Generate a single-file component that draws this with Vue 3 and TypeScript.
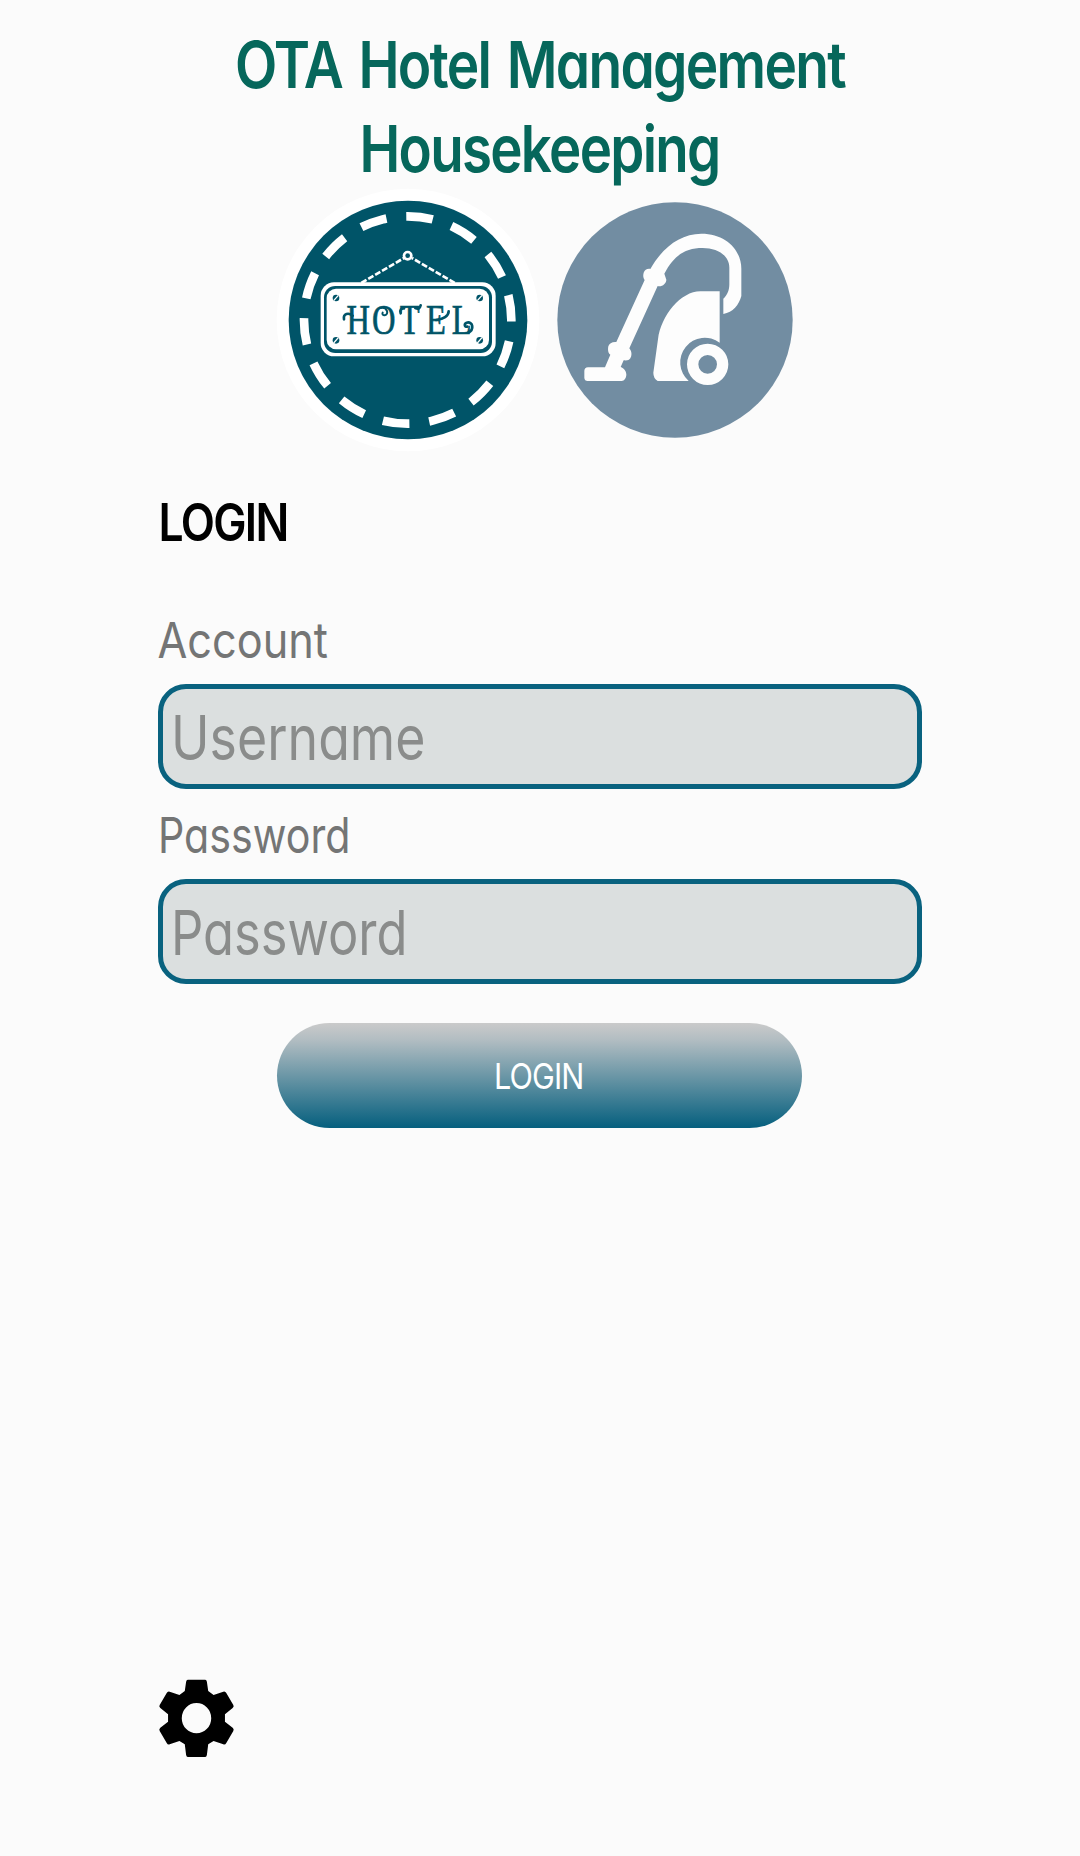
<script setup lang="ts">
import { ref } from 'vue'

const username = ref('')
const password = ref('')
const screws = [[200, 338], [631, 338], [200, 465], [631, 465]]
</script>

<template>
  <main class="screen">
    <header class="brand">
      <h1>
        <svg width="764" height="168" viewBox="158 20 764 168">
          <text x="235" y="87.700" textLength="610" lengthAdjust="spacingAndGlyphs">OTA Hotel Management</text>
          <text x="359.500" y="171.700" textLength="360" lengthAdjust="spacingAndGlyphs">Housekeeping</text>
        </svg>
      </h1>
      <div class="logos">
        <svg class="hotel" width="268" height="264" viewBox="14 8 804 792">
          <circle cx="416" cy="404" r="394" fill="#fff" />
          <circle cx="416" cy="404" r="358" fill="#005468" />
          <circle cx="415" cy="404" r="311" fill="none" stroke="#fff" stroke-width="26" stroke-dasharray="80 59.580" transform="rotate(-13.900 415 404)" />
          <path d="M276 293 404 218M556 293 428 218" stroke="#fff" stroke-width="8" stroke-dasharray="18 6" />
          <circle cx="415" cy="211" r="11" fill="none" stroke="#fff" stroke-width="8" />
          <rect x="154" y="291" width="525" height="222" rx="40" fill="#fff" />
          <rect x="164" y="302" width="504" height="201" rx="34" fill="#005468" />
          <rect x="172" y="310" width="487" height="182" rx="28" fill="#fff" />
          <g v-for="([x, y], i) in screws" :key="i">
            <circle :cx="x" :cy="y" r="10" fill="#005468" />
            <path :d="`M${x - 7} ${y + 8} ${x + 7} ${y - 8}`" stroke="#fff" stroke-width="4" />
          </g>
          <text class="sign" x="297 395 502 603 702" y="446" transform="scale(.78 1)">HOTEL</text>
          <g fill="none" stroke="#005468" stroke-width="8" stroke-linecap="round">
            <path d="M224 402c-3-18 14-21 26-11" />
            <path d="M334 368c20-4 26 19 12 22-6 0-8-4-6-8" stroke-width="6" />
            <path d="M394 384c-4-10 2-16 10-15M438 368c8 4 14 2 16-8" />
            <path d="M500 404c22-2 38-12 38-26" />
            <path d="M596 442c20-9 15-35-4-30-9 4-6 14 2 12" />
          </g>
        </svg>
        <svg class="vacuum" width="236" height="236" viewBox="38 35 708 708">
          <circle cx="392" cy="389" r="353" fill="#728da2" />
          <g fill="#fdfdfd">
            <path d="M318 236C355 171 408 130 471 130c76 0 120 51 120 105v82c-7 27-25 49-54 54v-46c13-11 18-27 18-43v-50c0-37-36-59-80-59-54 0-86 23-115 77l6 18c0 12-13 22-26 19L255 474c8 10 8 20 3 30-4 6-10 7-20 6l-9 20c10 3 17 13 17 22 0 12-6 20-14 20H130c-6 0-10-4-10-10v-20c0-6 4-11 11-11h51l16-38c-7-5-8-15-6-25 3-9 11-14 24-13l85-186c-5-6-5-15-3-22 3-8 11-13 20-11Z" />
            <path d="M526 303v154A74 74 0 0 0 433 572H340q-13-8-13-25l14-100C350 375 410 303 468 303Z" />
          </g>
          <circle cx="490" cy="522" r="45" fill="none" stroke="#fdfdfd" stroke-width="34" />
        </svg>
      </div>
    </header>

    <form class="login" @submit.prevent>
      <h2>
        <svg width="300" height="60" viewBox="158 491.500 300 60">
          <text x="158.500" y="540.300" textLength="129" lengthAdjust="spacingAndGlyphs">LOGIN</text>
        </svg>
      </h2>
      <label for="account">
        <svg width="300" height="60" viewBox="158 609 300 60">
          <text x="157.500" y="657.300" textLength="170.500" lengthAdjust="spacingAndGlyphs">Account</text>
        </svg>
      </label>
      <div class="field"><input id="account" v-model="username" class="user" type="text" placeholder="Username"></div>
      <label for="password">
        <svg width="300" height="60" viewBox="158 804.500 300 60">
          <text x="158" y="852.300" textLength="192.500" lengthAdjust="spacingAndGlyphs">Password</text>
        </svg>
      </label>
      <div class="field"><input id="password" v-model="password" class="pass" type="password" placeholder="Password"></div>
      <button type="submit">
        <svg width="240" height="50" viewBox="420 1050 240 50">
          <text x="494" y="1088.300" textLength="89.500" lengthAdjust="spacingAndGlyphs">LOGIN</text>
        </svg>
      </button>
    </form>

    <footer>
      <svg width="75" height="79" viewBox="58 58 224 236">
        <path fill-rule="evenodd" d="M144 60h52q4 0 5 6l4 28 16 12 29-10q6-2 9 4l21 36q3 5-2 9l-23 18v23l23 18q5 4 2 9l-21 36q-3 6-9 4l-29-10-16 10-4 32q-1 6-5 6h-52q-4 0-5-6l-4-32-16-10-29 10q-6 2-9-4l-21-36q-3-5 2-9l23-18v-23l-23-18q-5-4-2-9l21-36q3-6 9-4l29 10 16-12 4-28q1-6 5-6Zm26 70a44 45 0 1 0 0 90 44 45 0 0 0 0-90Z" />
      </svg>
    </footer>
  </main>
</template>

<style>
body { background: #fbfbfb; }
</style>

<style scoped>
.screen {
  box-sizing: border-box;
  height: 1856px;
  padding: 20px 158px 98px;
  display: flex;
  flex-direction: column;
  overflow: hidden;
  font-family: Inter, "Open Sans", sans-serif;
  font-feature-settings: "cv11" 1;
}
svg { display: block; overflow: visible; }
h1, h2 { margin: 0; }
.brand { display: flex; flex-direction: column; }
h1 { font-size: 64.500px; font-weight: 600; letter-spacing: -2px; word-spacing: 5px; fill: #06675b; }
.logos { display: flex; align-items: center; margin-left: 116.200px; gap: 15px; }
.sign {
  font: 400 125px "Liberation Serif", serif;
  letter-spacing: 0;
  fill: #005468;
  stroke: #005468;
  stroke-width: 2px;
}
.login { display: flex; flex-direction: column; margin-top: 40px; }
h2 { height: 118px; font-size: 52px; font-weight: 600; letter-spacing: -2px; fill: #000; }
label { height: 74px; font-size: 49.500px; fill: #747575; }
.field {
  box-sizing: border-box;
  height: 105px;
  margin-bottom: 16px;
  padding: 1px 0 0 8px;
  border: 5px solid #09627f;
  border-radius: 28px;
  background: #dbdfdf;
  overflow: hidden;
}
.field input {
  display: block;
  width: 720px;
  height: 95px;
  padding: 0;
  border: 0;
  outline: 0;
  background: transparent;
  font: 400 61.500px Inter, "Open Sans", sans-serif;
  font-feature-settings: "cv11" 1;
  color: #333;
  transform-origin: left center;
}
.user { transform: scaleX(.843); }
.pass { transform: scaleX(.823); }
.field input::placeholder { color: #8a8c8b; opacity: 1; }
.login button {
  display: flex;
  align-items: center;
  justify-content: center;
  width: 525px;
  height: 105px;
  margin: 23px 0 0 119px;
  padding: 0;
  border: 0;
  border-radius: 53px;
  background: linear-gradient(#cacaca, #b2bdc2 16%, #055f7e);
  font: 400 35.800px Inter, "Open Sans", sans-serif;
  letter-spacing: -1px;
  fill: #fff;
}
footer { margin: auto 0 0 1px; }
</style>
